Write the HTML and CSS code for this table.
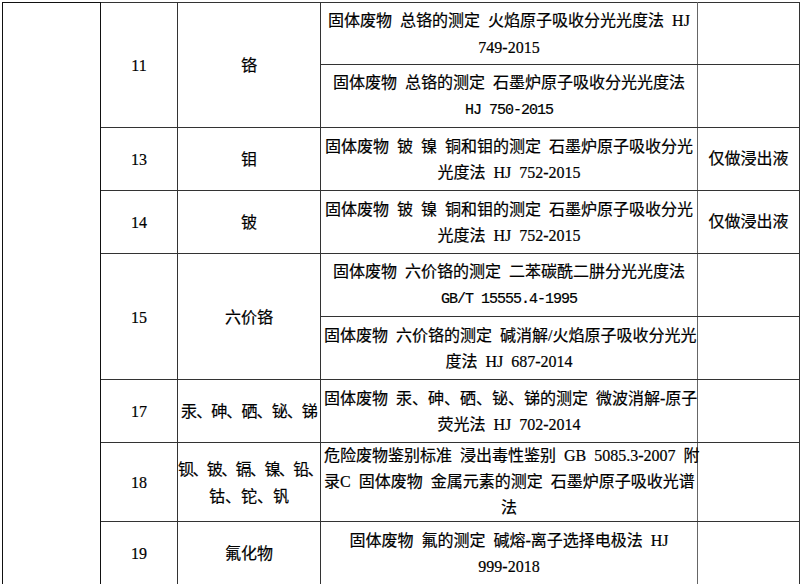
FILE: index.html
```html
<!DOCTYPE html>
<html>
<head>
<meta charset="utf-8">
<title>固体废物 检测方法</title>
<link rel="stylesheet" href="styles.css">
</head>
<body>
<table class="grid">
  <colgroup>
    <col class="c1"><col class="c2"><col class="c3"><col class="c4"><col class="c5">
  </colgroup>
  <tr class="h62">
    <td class="blank" rowspan="9"></td>
    <td class="num" rowspan="2">11</td>
    <td class="name" rowspan="2">铬</td>
    <td class="method">固体废物 总铬的测定 火焰原子吸收分光光度法 HJ<br>749-2015</td>
    <td class="note"></td>
  </tr>
  <tr class="h63">
    <td class="method">固体废物 总铬的测定 石墨炉原子吸收分光光度法<br><span class="mono">HJ 750-2015</span></td>
    <td class="note"></td>
  </tr>
  <tr class="h63">
    <td class="num">13</td>
    <td class="name">钼</td>
    <td class="method">固体废物 铍 镍 铜和钼的测定 石墨炉原子吸收分光<br>光度法 HJ 752-2015</td>
    <td class="note">仅做浸出液</td>
  </tr>
  <tr class="h63">
    <td class="num">14</td>
    <td class="name">铍</td>
    <td class="method">固体废物 铍 镍 铜和钼的测定 石墨炉原子吸收分光<br>光度法 HJ 752-2015</td>
    <td class="note">仅做浸出液</td>
  </tr>
  <tr class="h63">
    <td class="num" rowspan="2">15</td>
    <td class="name" rowspan="2">六价铬</td>
    <td class="method">固体废物 六价铬的测定 二苯碳酰二肼分光光度法<br><span class="mono">GB/T 15555.4-1995</span></td>
    <td class="note"></td>
  </tr>
  <tr class="h63">
    <td class="method">固体废物 六价铬的测定 碱消解/火焰原子吸收分光光<br>度法 HJ 687-2014</td>
    <td class="note"></td>
  </tr>
  <tr class="h63">
    <td class="num">17</td>
    <td class="name"><span class="snug">汞、砷、硒、铋、锑</span></td>
    <td class="method">固体废物 汞、砷、硒、铋、锑的测定 微波消解-原子<br>荧光法 HJ 702-2014</td>
    <td class="note"></td>
  </tr>
  <tr class="h77">
    <td class="num">18</td>
    <td class="name"><span class="tight">钡、铍、镉、镍、铅、</span><br>钴、铊、钒</td>
    <td class="method tight-lines">危险废物鉴别标准 浸出毒性鉴别 GB 5085.3-2007 附<br>录C 固体废物 金属元素的测定 石墨炉原子吸收光谱<br>法</td>
    <td class="note"></td>
  </tr>
  <tr class="h63">
    <td class="num">19</td>
    <td class="name">氟化物</td>
    <td class="method">固体废物 氟的测定 碱熔-离子选择电极法 HJ<br>999-2018</td>
    <td class="note"></td>
  </tr>
</table>
</body>
</html>
```
FILE: styles.css
```css
html, body {
  margin: 0;
  padding: 0;
  background: #ffffff;
}

body {
  padding: 2px 0 0 2px;
  font-family: "Liberation Serif", "Noto Sans CJK SC", serif;
  font-size: 16px;
  color: #000;
}

.grid {
  border-collapse: collapse;
  table-layout: fixed;
  width: 797px;
  border: 1px solid #111;
}

.c1 { width: 98px; }
.c2 { width: 77px; }
.c3 { width: 143px; }
.c4 { width: 377px; }
.c5 { width: 102px; }

.grid td {
  border: 1px solid #333;
  padding: 0;
  text-align: center;
  vertical-align: middle;
  line-height: 26.5px;
  white-space: nowrap;
  overflow: visible;
  -webkit-text-stroke: 0.2px #000;
}

.grid td.num,
.grid td.name {
  padding-top: 3px;
}

.grid td.method {
  padding: 2px 3px 0;
  word-spacing: 4px;
  border-left-color: #666;
  border-right-color: #666;
}

.grid td.blank {
  border-color: #111;
}

.h62 { height: 62px; }
.h63 { height: 63px; }
.h77 { height: 77px; }

.grid td .mono {
  font-family: "Liberation Mono", "Noto Sans CJK SC", monospace;
  font-size: 15px;
  letter-spacing: -1px;
  word-spacing: 0;
}

.snug {
  letter-spacing: -0.9px;
}

.tight {
  letter-spacing: -1.6px;
}

.grid td.tight-lines {
  line-height: 26px;
  padding-top: 0;
}
```
